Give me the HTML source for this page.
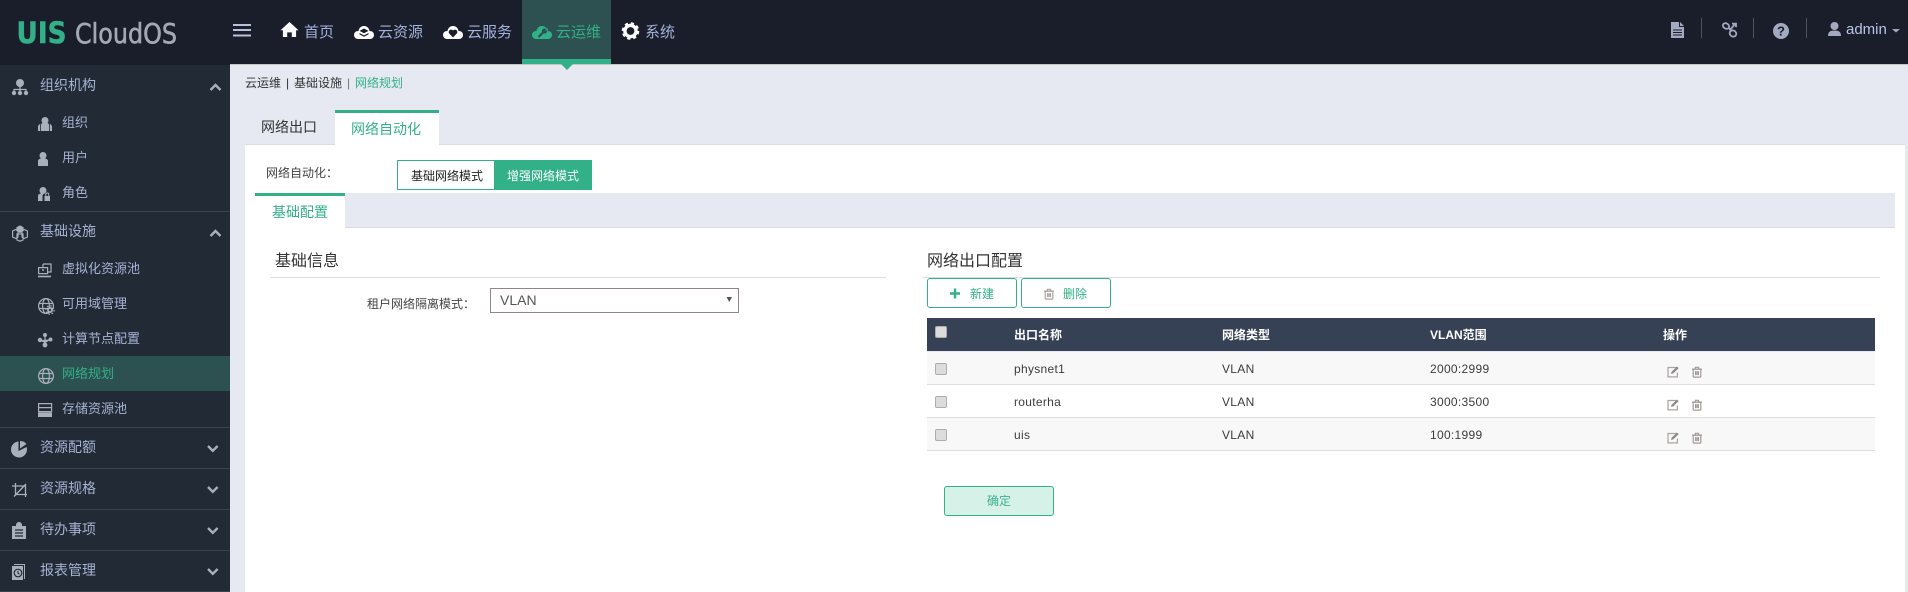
<!DOCTYPE html>
<html lang="zh">
<head>
<meta charset="utf-8">
<title>UIS CloudOS</title>
<style>
html,body{margin:0;padding:0;width:1908px;height:592px;overflow:hidden;background:#e6e9f2;font-family:"Liberation Sans","Noto Sans CJK SC",sans-serif}
div,span{position:absolute;box-sizing:border-box}
.t{white-space:nowrap;line-height:20px;height:20px}
.nav{font-size:15px;color:#a3b2da;top:23px}
.s1{font-size:14px;color:#a5b3d3;left:40px}
.s2{font-size:13px;color:#a5b3d3;left:62px}
.line{left:0;width:230px;height:1px;background:#39424e}
.d{color:#333;font-size:12px}
.h{color:#fff;font-size:12px;top:325px;font-weight:bold}
.c{color:#3c3c3c;font-size:12px;letter-spacing:.3px}
.cb{width:12px;height:12px;left:935px;background:#dcdcdc;border:1px solid #adadad;border-radius:2px}
em{font-style:normal;font-family:"Noto Sans CJK TC",sans-serif}
svg{position:absolute;left:0;top:0;pointer-events:none}
</style>
</head>
<body>
<!-- backgrounds -->
<div style="left:0;top:0;width:1908px;height:65px;background:#1a1d2a"></div>
<div style="left:230px;top:64px;width:1678px;height:1px;background:#c9c5c2"></div>
<div style="left:522px;top:0;width:89px;height:59px;background:#2d5050"></div>
<div style="left:522px;top:59px;width:89px;height:5px;background:#32b088"></div>
<div style="left:0;top:65px;width:230px;height:527px;background:#222a35"></div>
<div style="left:0;top:356px;width:230px;height:35px;background:#2d5050"></div>
<div class="line" style="top:211px"></div>
<div class="line" style="top:427px"></div>
<div class="line" style="top:468px"></div>
<div class="line" style="top:509px"></div>
<div class="line" style="top:550px"></div>
<div class="line" style="top:591px"></div>

<!-- white panel -->
<div style="left:245px;top:144px;width:1660px;height:448px;background:#fff;border-top:1px solid #dcdcdc"></div>
<div style="left:335px;top:110px;width:104px;height:36px;background:#fff;border-top:3px solid #32b088"></div>
<div style="left:255px;top:193px;width:1640px;height:35px;background:#e6e9f2;border-bottom:1px solid #dcdcdc"></div>
<div style="left:255px;top:193px;width:90px;height:36px;background:#fff;border-top:3px solid #32b088"></div>

<!-- logo -->
<svg width="1908" height="592" style="z-index:1">
<text x="16.500" y="43" font-family="DejaVu Sans" font-weight="bold" font-size="29" fill="#32b088" stroke="#32b088" stroke-width=".5" textLength="50" lengthAdjust="spacingAndGlyphs">UIS</text>
<text x="75" y="43" font-family="DejaVu Sans" font-size="28" fill="#a3a8b4" stroke="#a3a8b4" stroke-width=".6" textLength="102" lengthAdjust="spacingAndGlyphs">CloudOS</text>
</svg>

<!-- top nav text -->
<span class="t nav" style="left:304px">首页</span>
<span class="t nav" style="left:378px">云资源</span>
<span class="t nav" style="left:467px">云服务</span>
<span class="t nav" style="left:556px;color:#32b088">云运维</span>
<span class="t nav" style="left:645px">系统</span>
<span class="t" style="left:1846px;top:20px;font-size:15px;color:#b8c5ea">admin</span>

<!-- sidebar text -->
<span class="t s1" style="top:75px">组织机构</span>
<span class="t s2" style="top:113px">组织</span>
<span class="t s2" style="top:148px">用户</span>
<span class="t s2" style="top:183px">角色</span>
<span class="t s1" style="top:221px">基础设施</span>
<span class="t s2" style="top:259px">虚拟化资源池</span>
<span class="t s2" style="top:294px">可用域管理</span>
<span class="t s2" style="top:329px">计算节点配置</span>
<span class="t s2" style="top:364px;color:#32b088">网络规划</span>
<span class="t s2" style="top:399px">存储资源池</span>
<span class="t s1" style="top:437px">资源配额</span>
<span class="t s1" style="top:478px">资源规格</span>
<span class="t s1" style="top:519px">待办事项</span>
<span class="t s1" style="top:560px">报表管理</span>

<!-- breadcrumb -->
<span class="t d" style="left:245px;top:73px">云运维</span>
<span class="t d" style="left:286px;top:73px">|</span>
<span class="t d" style="left:294px;top:73px">基础设施</span>
<span class="t d" style="left:347px;top:73px;color:#777">|</span>
<span class="t d" style="left:355px;top:73px;color:#32b088">网络规划</span>

<!-- tabs -->
<span class="t" style="left:261px;top:117px;font-size:14px;color:#333">网络出口</span>
<span class="t" style="left:351px;top:119px;font-size:14px;color:#32b088">网络自动化</span>
<span class="t d" style="left:266px;top:163px;color:#444">网络自动化<em>：</em></span>

<!-- toggle -->
<div style="left:397px;top:160px;width:98px;height:30px;background:#fff;border:1px solid #32b088"></div>
<div style="left:494px;top:160px;width:98px;height:30px;background:#32b088"></div>
<span class="t d" style="left:411px;top:166px;color:#222">基础网络模式</span>
<span class="t d" style="left:507px;top:166px;color:#fff">增强网络模式</span>

<span class="t" style="left:272px;top:202px;font-size:14px;color:#32b088">基础配置</span>

<!-- left form -->
<span class="t" style="left:275px;top:252px;font-size:16px;color:#333">基础信息</span>
<div style="left:270px;top:277px;width:616px;height:1px;background:#dedede"></div>
<span class="t d" style="left:367px;top:294px;color:#444">租户网络隔离模式<em>：</em></span>
<div style="left:490px;top:288px;width:249px;height:25px;background:#fff;border:1px solid #918784"></div>
<span class="t" style="left:500px;top:290px;font-size:14px;color:#555">VLAN</span>

<!-- right form -->
<span class="t" style="left:927px;top:252px;font-size:16px;color:#333">网络出口配置</span>
<div style="left:922px;top:277px;width:958px;height:1px;background:#dedede"></div>
<div style="left:927px;top:278px;width:90px;height:30px;background:#fff;border:1px solid #32b088;border-radius:3px"></div>
<div style="left:1021px;top:278px;width:90px;height:30px;background:#fff;border:1px solid #32b088;border-radius:3px"></div>
<span class="t d" style="left:970px;top:284px;color:#32b088">新建</span>
<span class="t d" style="left:1063px;top:284px;color:#32b088">删除</span>

<!-- table -->
<div style="left:927px;top:318px;width:948px;height:33px;background:#364156"></div>
<div style="left:927px;top:351px;width:948px;height:34px;background:#f8f8f8;border-top:1px solid #e6e9f2;border-bottom:1px solid #dedede"></div>
<div style="left:927px;top:385px;width:948px;height:33px;background:#fff;border-bottom:1px solid #dedede"></div>
<div style="left:927px;top:418px;width:948px;height:33px;background:#f8f8f8;border-bottom:1px solid #dedede"></div>

<div class="cb" style="top:326px"></div>
<div class="cb" style="top:363px"></div>
<div class="cb" style="top:396px"></div>
<div class="cb" style="top:429px"></div>

<span class="t h" style="left:1014px">出口名称</span>
<span class="t h" style="left:1222px">网络类型</span>
<span class="t h" style="left:1430px">VLAN范围</span>
<span class="t h" style="left:1663px">操作</span>

<span class="t c" style="left:1014px;top:359px">physnet1</span>
<span class="t c" style="left:1222px;top:359px">VLAN</span>
<span class="t c" style="left:1430px;top:359px">2000:2999</span>
<span class="t c" style="left:1014px;top:392px">routerha</span>
<span class="t c" style="left:1222px;top:392px">VLAN</span>
<span class="t c" style="left:1430px;top:392px">3000:3500</span>
<span class="t c" style="left:1014px;top:425px">uis</span>
<span class="t c" style="left:1222px;top:425px">VLAN</span>
<span class="t c" style="left:1430px;top:425px">100:1999</span>

<!-- confirm -->
<div style="left:944px;top:486px;width:110px;height:30px;background:#d5f1e8;border:1px solid #32b088;border-radius:3px"></div>
<span class="t d" style="left:987px;top:491px;color:#3fb391">确定</span>

<!-- icons -->
<svg width="1908" height="592" style="z-index:2" viewBox="0 0 1908 592">
<defs>
<g id="cl"><circle cx="10" cy="5.500" r="5.500"/><circle cx="4" cy="9" r="4"/><circle cx="16" cy="9" r="4"/><rect x="4" y="8" width="12" height="5"/></g>
<g id="globe" fill="none" stroke="#a9b0bc" stroke-width="1.200">
<circle cx="8" cy="8" r="7.400"/><ellipse cx="8" cy="8" rx="3.400" ry="7.400"/><path d="M1 5.500h14M1 10.500h14"/>
</g>
<g id="tr" fill="none" stroke="#a09a98" stroke-width="1.200">
<rect x="1.200" y="2.600" width="7.600" height="8" rx=".8"/><path d="M0 2.600h10M3.400 2.400V.8h3.200v1.600M3.600 4.600v4M5 4.600v4M6.400 4.600v4"/>
</g>
<g id="ed">
<path d="M9.500 2H1v9.400h9.400V7" fill="none" stroke="#a8a4a2" stroke-width="1.200"/>
<path d="M4 8.500l.6-2.200L10 1l1.700 1.600-5.400 5.300z" fill="#8f8a88"/>
</g>
</defs>

<!-- hamburger -->
<g fill="#b9c0da"><rect x="233" y="24" width="18" height="2"/><rect x="233" y="29" width="18" height="2"/><rect x="233" y="34.500" width="18" height="2"/></g>
<!-- home -->
<path fill="#fff" d="M289.500 22l9 8.200h-2.400V37h-4.300v-4.600h-4.600V37h-4.300v-6.800h-2.400z"/>
<!-- cloud res -->
<use href="#cl" x="354" y="26" fill="#fff"/>
<path fill="#1a1d2a" d="M364 28.500l4.500 2.400-4.500 2.400-4.500-2.400zM359.500 33l4.500 2.400 4.500-2.400v1.400l-4.500 2.400-4.500-2.400z"/>
<!-- cloud svc -->
<use href="#cl" x="443" y="26" fill="#fff"/>
<path fill="#1a1d2a" d="M453 37.500l-3.800-4a2.400 2.400 0 0 1 3.800-3 2.400 2.400 0 0 1 3.800 3z"/>
<!-- cloud ops -->
<use href="#cl" x="532" y="26" fill="#32b088"/>
<path stroke="#2d5050" stroke-width="2.200" fill="none" d="M538.500 37l4.500-4.500"/><circle cx="544.500" cy="31" r="2.600" fill="#2d5050"/><path d="M545 31l2.200-3 1 2z" fill="#32b088"/>
<!-- gear -->
<circle cx="630.500" cy="31" r="5.600" fill="none" stroke="#fff" stroke-width="3.400"/>
<circle cx="630.500" cy="31" r="7.600" fill="none" stroke="#fff" stroke-width="2.400" stroke-dasharray="3.200 2.770"/>
<!-- active arrow -->
<path fill="#32b088" d="M561 64h12l-6 6z"/>

<!-- top right -->
<path fill="#a3a9c0" d="M1671 22h8v5h5v11h-13z"/><path fill="#a3a9c0" d="M1680 22l4 4h-4z"/>
<path stroke="#1a1d2a" stroke-width="1" d="M1673 30h9M1673 32.500h9M1673 35h9"/>
<g fill="#4d5261"><rect x="1701" y="18" width="1" height="20"/><rect x="1753" y="18" width="1" height="20"/><rect x="1806" y="18" width="1" height="20"/></g>
<g fill="none" stroke="#a3a9c0" stroke-width="1.800">
<ellipse cx="1726" cy="26" rx="3.300" ry="2.600" transform="rotate(30 1726 26)"/>
<ellipse cx="1733" cy="33.500" rx="3.400" ry="3" transform="rotate(30 1733 33.500)"/>
<path d="M1729 28l2 3M1730 30l5-6M1732 23.600h4v3.600"/>
</g>
<circle cx="1781" cy="31" r="8" fill="#a3a9c0"/>
<text x="1781" y="35.500" font-family="Liberation Sans" font-weight="bold" font-size="13" fill="#1a1d2a" text-anchor="middle">?</text>
<circle cx="1834.500" cy="26" r="4" fill="#a3a9c0"/><path fill="#a3a9c0" d="M1828 36c0-4 2-5.500 6.500-5.500s6.500 1.500 6.500 5.500z"/>
<path fill="#a3a9c0" d="M1892 29h8l-4 3.500z"/>

<!-- sidebar head icons -->
<g fill="#a9b0bc">
<!-- org -->
<circle cx="20" cy="83" r="4"/><rect x="19.300" y="86" width="1.400" height="5"/>
<path fill="none" stroke="#a9b0bc" stroke-width="1.200" d="M14 92v-2.500h12V92"/>
<circle cx="14" cy="93" r="2.200"/><circle cx="20" cy="93" r="2.200"/><circle cx="26" cy="93" r="2.200"/>
<!-- group -->
<circle cx="45" cy="120.500" r="3.500"/><path d="M41 131v-6c0-1.500 1.500-2.500 4-2.500s4 1 4 2.500v6z"/>
<path d="M38 131v-5l2.200-2.500V131zM52 131v-5l-2.200-2.500V131z"/>
<!-- user -->
<circle cx="43" cy="155.500" r="3.500"/><path d="M38 166v-5c0-1.800 2-2.800 5-2.800s5 1 5 2.800v5z"/>
<!-- role lock -->
<circle cx="43" cy="190.500" r="3.500"/><path d="M38 201v-5c0-1.800 2-2.800 5-2.800l1 .2-1.500 2v5.600z"/>
<path d="M44.500 196h5.500v5h-5.500z"/><path fill="none" stroke="#a9b0bc" stroke-width="1" d="M45.800 196v-1.500a1.500 1.500 0 0 1 3 0V196"/>
<!-- storage -->
<path fill="none" stroke="#a9b0bc" stroke-width="1.200" d="M38.600 403.600h13v4h-13zM38.600 407.600h13v4h-13z"/>
<rect x="38" y="412.500" width="14" height="4.500"/>
<!-- pie -->
<path d="M20 441v7.500l6.500-4.500a8 8 0 0 0-6.500-3z"/>
<path d="M18.500 441.500a8 8 0 1 0 8.500 8 8 8 0 0 0-.4-2.500L18.500 451z"/>
<!-- clipboard -->
<path d="M12 526h4v-1a3 3 0 0 1 6 0v1h4v13H12z"/>
<path stroke="#222a35" stroke-width="1.200" d="M15 530h8M15 533h8M15 536h8"/>
<!-- report -->
<path d="M12 566h11v14H12z"/><rect x="24" y="564" width="1" height="15"/><rect x="14" y="564" width="11" height="1"/>
<circle cx="18" cy="573" r="3.800" fill="none" stroke="#222a35" stroke-width="1.200"/><path stroke="#222a35" fill="none" d="M18 571v2.200l1.500 1"/>
</g>
<!-- infra -->
<g fill="none" stroke="#a9b0bc" stroke-width="1.200">
<path d="M20 226l3 1.600v3L20 232.400l-3-1.800v-3z" fill="#a9b0bc"/>
<path d="M12.600 231l3-1.500 2.400 1.300v6.400l-2.400 1.300-3-1.500zM27.400 231l-3-1.500-2.400 1.300v6.400l2.400 1.300 3-1.500zM17 234h6v6l-3 1.200-3-1.200z"/>
</g>
<!-- vm -->
<g fill="none" stroke="#a9b0bc" stroke-width="1.200">
<path d="M43 264h8v8h-3M43 264v3M38.600 267.600h9v6h-9z"/>
<path stroke-width="1.600" d="M38 276.500h13"/>
<path stroke-width="1.400" d="M42 270h2"/>
</g>
<!-- az -->
<use href="#globe" x="38" y="298"/>
<circle cx="50" cy="310" r="3" fill="#a9b0bc"/><circle cx="50" cy="310" r="4.200" fill="none" stroke="#a9b0bc" stroke-width="1.200" stroke-dasharray="1.600 1.700"/><circle cx="50" cy="310" r="1.100" fill="#222a35"/>
<!-- compute -->
<g fill="#a9b0bc">
<circle cx="45" cy="335" r="2"/><circle cx="40" cy="340" r="2.200"/><circle cx="50.500" cy="339.500" r="2"/><circle cx="45" cy="345" r="2.400"/>
<path stroke="#a9b0bc" stroke-width="1.200" d="M45 336v8M40 340l5 2.500 5-3"/>
</g>
<!-- network -->
<use href="#globe" x="38" y="368"/>
<!-- crop -->
<g fill="none" stroke="#a9b0bc" stroke-width="1.300">
<path d="M15.500 483v11.500H27M12 486h13.500v11M14 496.500L26 484"/>
</g>
<!-- chevrons -->
<g fill="none" stroke="#a9b0bc" stroke-width="2.400">
<path d="M210.500 90l5-5 5 5M210.500 236l5-5 5 5"/>
<path d="M208 446l4.800 4.800 4.800-4.800M208 487l4.800 4.800 4.800-4.800M208 528l4.800 4.800 4.800-4.800M208 569l4.800 4.800 4.800-4.800"/>
</g>
<!-- select arrow -->
<path fill="#555" d="M726.500 297h5.500l-2.750 5z"/>
<!-- buttons -->
<path stroke="#32b088" stroke-width="2.400" d="M950 293.500h10M955 288.500v10"/>
<use href="#tr" x="1044" y="288.500" opacity=".9"/>
<!-- row icons -->
<use href="#ed" x="1667" y="365.500"/><use href="#tr" x="1692" y="366.500"/>
<use href="#ed" x="1667" y="398.500"/><use href="#tr" x="1692" y="399.500"/>
<use href="#ed" x="1667" y="431.500"/><use href="#tr" x="1692" y="432.500"/>
</svg>
</body>
</html>
